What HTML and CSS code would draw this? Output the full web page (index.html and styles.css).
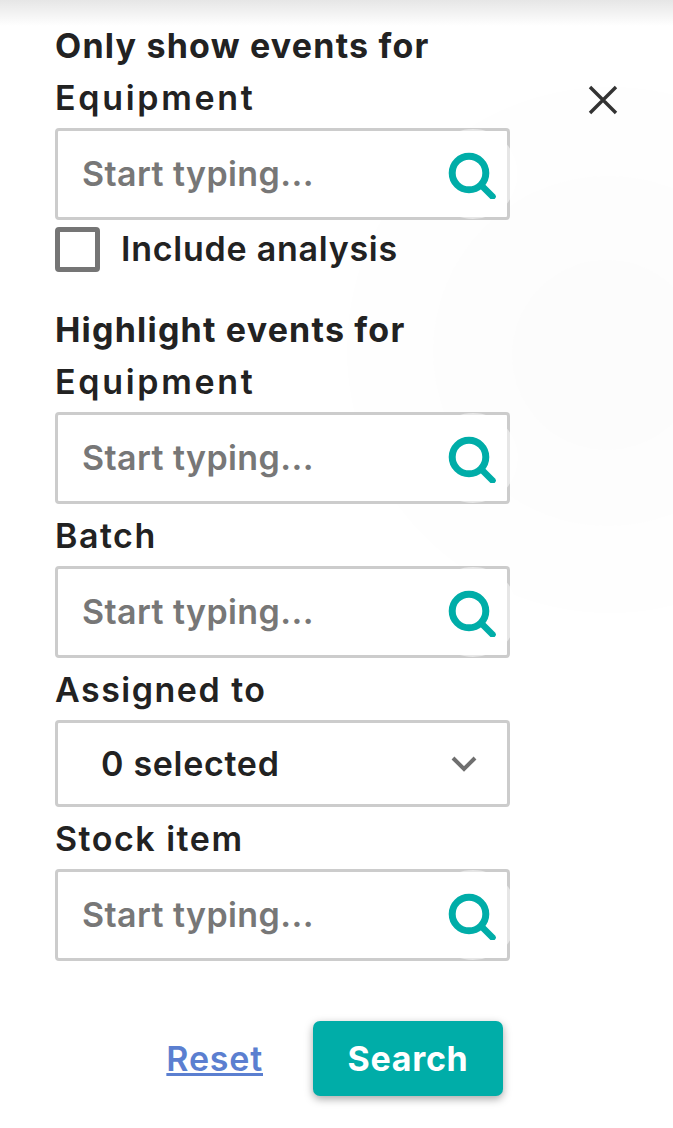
FILE: index.html
```html
<!DOCTYPE html>
<html>
<head>
    <meta charset="UTF-8">
    <meta name="viewport" content="width=device-width, initial-scale=1.0">
    <title>Filter events</title>
    <link rel="stylesheet" href="styles.css">
</head>
<body>
    <div class="panel">
        <div class="top-shadow"></div>
        <div class="ripple ripple-far"></div>
        <div class="ripple ripple-outer"></div>
        <div class="ripple ripple-inner"></div>

        <button class="close-button" aria-label="Close">
            <svg width="32" height="32" viewBox="0 0 32 32"><path d="M3 3 L29 29 M29 3 L3 29" fill="none" stroke="#333" stroke-width="3.4"/></svg>
        </button>

        <form class="filter-form">
            <h2 class="section-title">Only show events for</h2>
            <label class="field-label label-wide">Equipment</label>
            <div class="search-box">
                <input type="text" placeholder="Start typing...">
                <span class="search-icon">
                    <svg width="50" height="50" viewBox="0 0 50 50"><circle cx="21" cy="24" r="16.800" fill="none" stroke="#00ada8" stroke-width="7"/><path d="M34 37 L44.500 47.500" fill="none" stroke="#00ada8" stroke-width="6.500" stroke-linecap="round"/></svg>
                </span>
            </div>
            <label class="check-row">
                <span class="check-box"></span>
                <span>Include analysis</span>
            </label>

            <h2 class="section-title section-second">Highlight events for</h2>
            <label class="field-label label-wide">Equipment</label>
            <div class="search-box">
                <input type="text" placeholder="Start typing...">
                <span class="search-icon">
                    <svg width="50" height="50" viewBox="0 0 50 50"><circle cx="21" cy="24" r="16.800" fill="none" stroke="#00ada8" stroke-width="7"/><path d="M34 37 L44.500 47.500" fill="none" stroke="#00ada8" stroke-width="6.500" stroke-linecap="round"/></svg>
                </span>
            </div>

            <label class="field-label label-small">Batch</label>
            <div class="search-box">
                <input type="text" placeholder="Start typing...">
                <span class="search-icon">
                    <svg width="50" height="50" viewBox="0 0 50 50"><circle cx="21" cy="24" r="16.800" fill="none" stroke="#00ada8" stroke-width="7"/><path d="M34 37 L44.500 47.500" fill="none" stroke="#00ada8" stroke-width="6.500" stroke-linecap="round"/></svg>
                </span>
            </div>

            <label class="field-label label-small">Assigned to</label>
            <div class="select-box">
                <span>0 selected</span>
                <svg width="28" height="18" viewBox="0 0 28 18"><path d="M3 3 L14 14 L25 3" fill="none" stroke="#6f6f6f" stroke-width="4"/></svg>
            </div>

            <label class="field-label label-small">Stock item</label>
            <div class="search-box">
                <input type="text" placeholder="Start typing...">
                <span class="search-icon">
                    <svg width="50" height="50" viewBox="0 0 50 50"><circle cx="21" cy="24" r="16.800" fill="none" stroke="#00ada8" stroke-width="7"/><path d="M34 37 L44.500 47.500" fill="none" stroke="#00ada8" stroke-width="6.500" stroke-linecap="round"/></svg>
                </span>
            </div>

            <div class="form-actions">
                <a class="reset-link" href="#">Reset</a>
                <button type="button" class="search-button">Search</button>
            </div>
        </form>
    </div>
</body>
</html>
```

FILE: styles.css
```css
html, body {
    margin: 0;
    padding: 0;
    background: #fff;
}

body {
    font-family: Inter, "Open Sans", sans-serif;
    color: #222;
}

.panel {
    position: relative;
    width: 673px;
    height: 1128px;
    overflow: hidden;
    box-sizing: border-box;
    padding: 20px 0 0 55px;
}

.top-shadow {
    position: absolute;
    top: 0;
    left: 0;
    right: 0;
    height: 26px;
    background: linear-gradient(#e6e6e6, #fff);
}

.ripple {
    position: absolute;
    border-radius: 50%;
    background: #fefefe;
}

.ripple-far {
    left: 347px;
    top: 87px;
    width: 526px;
    height: 526px;
}

.ripple-outer {
    left: 433px;
    top: 176px;
    width: 350px;
    height: 350px;
    background: #fdfdfd;
}

.ripple-inner {
    left: 512px;
    top: 260px;
    width: 190px;
    height: 190px;
    background: #fcfcfc;
}

.close-button {
    position: absolute;
    left: 587px;
    top: 84px;
    padding: 0;
    border: none;
    background: none;
    line-height: 0;
}

.filter-form {
    position: relative;
    width: 455px;
}

.section-title {
    margin: 0;
    font-size: 34px;
    line-height: 52px;
    font-weight: 700;
    letter-spacing: 1.2px;
    white-space: nowrap;
}

.section-second {
    margin-top: 32px;
}

.field-label {
    display: block;
    font-size: 34px;
    line-height: 52px;
    font-weight: 600;
    letter-spacing: 1.5px;
}

.label-wide {
    letter-spacing: 2.7px;
}

.label-small {
    height: 58px;
    line-height: 64px;
}

.search-box {
    position: relative;
    box-sizing: border-box;
    height: 92px;
    margin-top: 4px;
    border: 3px solid #ccc;
    border-radius: 4px;
    display: flex;
    align-items: center;
    background: #fff;
}

.search-box input {
    flex: 1;
    min-width: 0;
    border: none;
    outline: none;
    background: none;
    padding: 0 80px 2px 24px;
    font-family: inherit;
    font-size: 34px;
    font-weight: 600;
    letter-spacing: 0.4px;
    color: #777;
}

.search-box input::placeholder {
    color: #777;
    opacity: 1;
}

.search-icon {
    position: absolute;
    right: -11px;
    top: -2px;
    width: 90px;
    height: 90px;
    border-radius: 50%;
    background: rgba(255, 255, 255, 0.5);
    display: flex;
    align-items: center;
    justify-content: center;
}

.check-row {
    display: flex;
    align-items: center;
    gap: 21px;
    margin-top: 7px;
    font-size: 34px;
    font-weight: 600;
    letter-spacing: 0.75px;
}

.check-row span:last-child {
    margin-top: -2px;
}

.check-box {
    box-sizing: border-box;
    width: 45px;
    height: 45px;
    border: 5px solid #757575;
    border-radius: 4px;
}

.select-box {
    box-sizing: border-box;
    height: 87px;
    margin-top: 4px;
    padding: 0 29px 0 43px;
    border: 3px solid #ccc;
    border-radius: 4px;
    display: flex;
    align-items: center;
    justify-content: space-between;
    background: #fff;
    font-size: 34px;
    font-weight: 600;
    letter-spacing: 0.7px;
}

.form-actions {
    display: flex;
    justify-content: flex-end;
    align-items: center;
    gap: 50px;
    margin-top: 60px;
    padding-right: 7px;
}

.reset-link {
    color: #5b7fd0;
    font-size: 34px;
    font-weight: 600;
    letter-spacing: 0.8px;
}

.search-button {
    width: 190px;
    height: 75px;
    border: none;
    border-radius: 7px;
    background: #00ada8;
    color: #fff;
    font-family: inherit;
    font-size: 34px;
    font-weight: 700;
    letter-spacing: 0.7px;
    box-shadow: 0 3px 8px rgba(0, 0, 0, 0.35);
}
```
